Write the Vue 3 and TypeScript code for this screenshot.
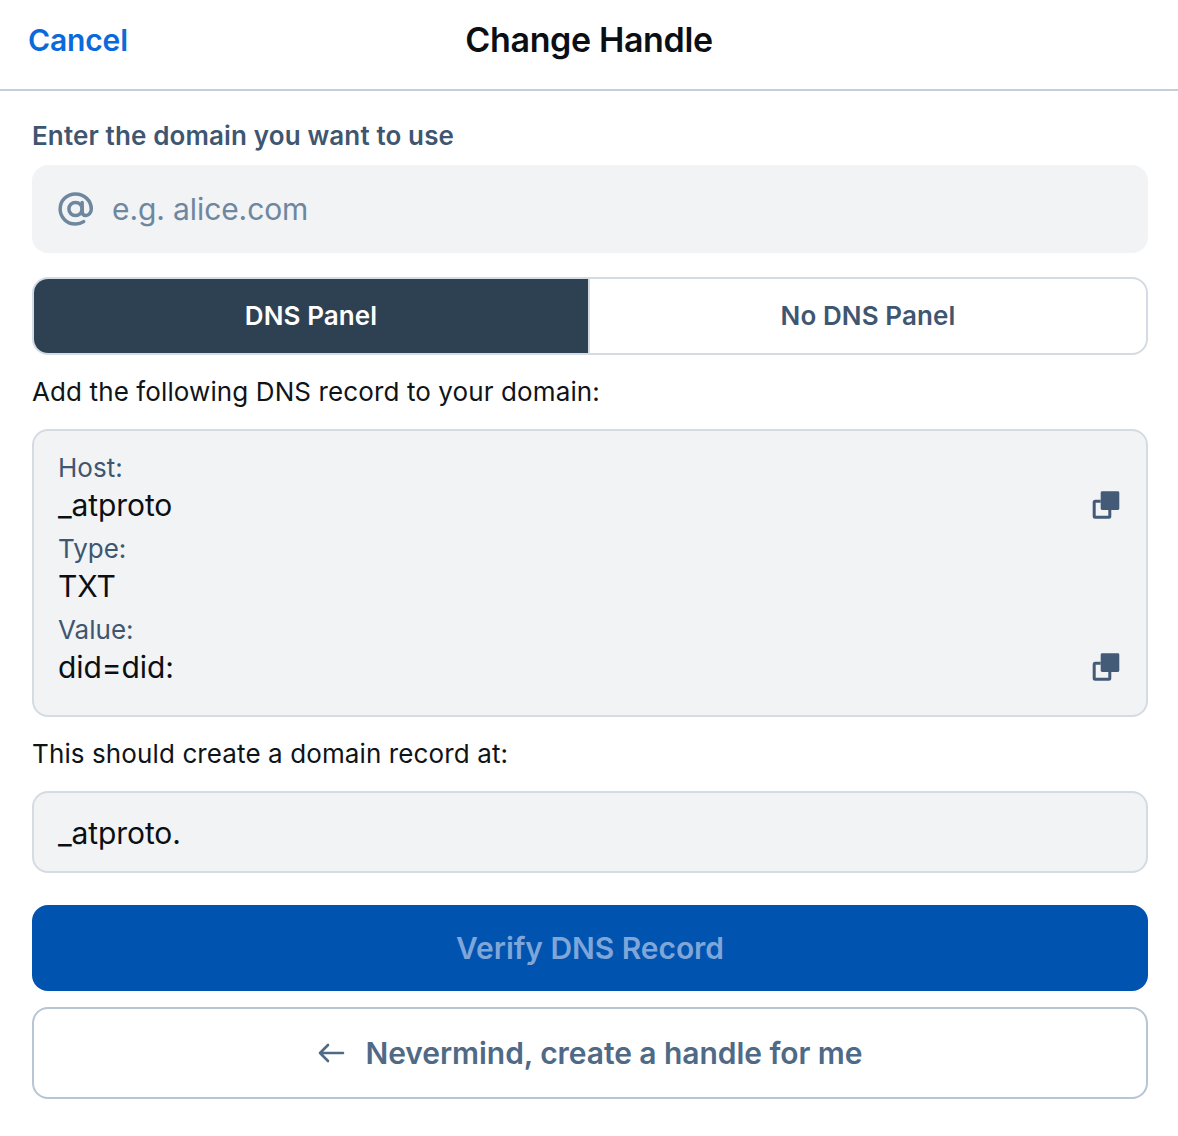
<script setup lang="ts">
const rows = [
  { label: 'Host:', value: '_atproto', copy: true },
  { label: 'Type:', value: 'TXT', copy: false },
  { label: 'Value:', value: 'did=did:', copy: true },
]
</script>

<template>
  <div class="page">
    <header class="header">
      <span class="cancel">Cancel</span>
      <h1 class="title">Change Handle</h1>
    </header>
    <main class="content">
      <div class="label">Enter the domain you want to use</div>
      <div class="input">
        <svg class="at" width="36" height="36" viewBox="-0.5 -0.5 37 37" fill="none" stroke="#6f869f" stroke-width="3.6" stroke-linecap="round">
          <circle cx="17.500" cy="18" r="6.800" />
          <path d="M24.300 11.200v9c0 2.800 1.600 4.400 3.800 4.400 3 0 5.600-2.800 5.600-6.600C33.700 9.400 26.500 2.600 17.500 2.600S1.700 9.400 1.700 18 8.500 33.400 17.500 33.400c3.200 0 6-.8 8.400-2.400" />
        </svg>
        <span class="placeholder">e.g. alice.com</span>
      </div>
      <div class="toggle">
        <div class="tab active">DNS Panel</div>
        <div class="tab">No DNS Panel</div>
      </div>
      <p class="text first">Add the following DNS record to your domain:</p>
      <section class="card records">
        <div v-for="row in rows" :key="row.label" class="record">
          <div class="record-text">
            <div class="record-label">{{ row.label }}</div>
            <div class="record-value">{{ row.value }}</div>
          </div>
          <svg v-if="row.copy" class="copy" width="28" height="28" viewBox="0 0 28 28">
            <rect x="8.700" y="0.300" width="18.600" height="18.700" rx="1.400" fill="#435b76" />
            <path d="M8.700 10.200H3.200a1 1 0 0 0-1 1v14a1 1 0 0 0 1 1h13.600a1 1 0 0 0 1-1V19" fill="none" stroke="#435b76" stroke-width="3" />
          </svg>
        </div>
      </section>
      <p class="text second">This should create a domain record at:</p>
      <section class="card domain"><span class="domain-text">_atproto.</span></section>
      <button class="verify">Verify DNS Record</button>
      <button class="back">
        <svg width="28" height="28" viewBox="0 0 28 28" fill="none" stroke="#4f6a87" stroke-width="2.600" stroke-linecap="round" stroke-linejoin="round">
          <path d="M26 14H3M11 6l-8 8 8 8" />
        </svg>
        <span>Nevermind, create a handle for me</span>
      </button>
    </main>
  </div>
</template>

<style scoped>
.page {
  width: 1178px;
  height: 1136px;
  background: #fff;
  font-family: Inter, "Liberation Sans", sans-serif;
  color: #000;
  overflow: hidden;
}
.header {
  height: 91px;
  border-bottom: 2px solid #c4cfdc;
  display: grid;
  grid-template-columns: 1fr auto 1fr;
  align-items: center;
  padding: 0 28px 9px;
  box-sizing: border-box;
}
.cancel {
  font-size: 30px;
  font-weight: 600;
  letter-spacing: -0.15px;
  color: #0a6adb;
}
.title {
  margin: 0 0 2px;
  font-size: 34px;
  font-weight: 600;
  letter-spacing: -0.36px;
  color: #0b0f14;
}
.content {
  padding: 0 30px 0 32px;
  display: flex;
  flex-direction: column;
}
.label {
  margin-top: 29px;
  font-size: 26px;
  line-height: 32px;
  font-weight: 600;
  letter-spacing: 0.13px;
  color: #3f5670;
}
.input {
  margin-top: 13px;
  height: 88px;
  background: #f1f3f5;
  border-radius: 16px;
  display: flex;
  align-items: center;
  padding-left: 26px;
  gap: 18px;
}
.placeholder {
  font-size: 30px;
  letter-spacing: -0.1px;
  color: #6f869f;
}
.toggle {
  margin-top: 24px;
  height: 78px;
  box-sizing: border-box;
  border: 2px solid #d4dbe2;
  border-radius: 16px;
  display: grid;
  grid-template-columns: 1fr 1fr;
  overflow: hidden;
}
.tab {
  box-sizing: border-box;
  display: flex;
  align-items: center;
  justify-content: center;
  padding-bottom: 1px;
  font-size: 26px;
  font-weight: 600;
  letter-spacing: 0.1px;
  color: #3f5670;
}
.tab.active {
  background: #2e4153;
  color: #fff;
  border-right: 2px solid #d4dbe2;
}
.text {
  margin: 0;
  font-size: 26px;
  line-height: 32px;
  letter-spacing: 0.11px;
  color: #0f1419;
}
.text.first { margin-top: 21px; }
.text.second { margin-top: 21px; }
.card {
  background: #f1f3f5;
  border: 2px solid #d4dbe2;
  border-radius: 16px;
  box-sizing: border-box;
}
.records {
  margin-top: 21px;
  height: 288px;
  padding: 19px 26px 0 24px;
  display: flex;
  flex-direction: column;
  gap: 6px;
}
.record {
  display: flex;
  align-items: flex-start;
  justify-content: space-between;
}
.record-label {
  font-size: 26px;
  line-height: 35px;
  color: #3f5670;
}
.record-value {
  font-size: 30px;
  line-height: 40px;
  letter-spacing: -0.1px;
  color: #0b0f14;
}
.copy {
  margin-top: 41px;
}
.domain {
  margin-top: 21px;
  height: 82px;
  display: flex;
  align-items: center;
  padding-left: 24px;
  font-size: 30px;
  letter-spacing: -0.1px;
  color: #0b0f14;
}
.domain-text {
  padding-top: 2px;
}
.verify {
  margin-top: 32px;
  height: 86px;
  border: 0;
  border-radius: 16px;
  background: #0053af;
  color: #7fa6d9;
  font: 600 30px Inter, "Liberation Sans", sans-serif;
  letter-spacing: -0.06px;
}
.back {
  margin-top: 16px;
  height: 92px;
  background: #fff;
  border: 2px solid #b8c5d3;
  border-radius: 16px;
  color: #4f6a87;
  font: 600 30px Inter, "Liberation Sans", sans-serif;
  letter-spacing: -0.06px;
  display: flex;
  align-items: center;
  justify-content: center;
  gap: 20px;
}
</style>
